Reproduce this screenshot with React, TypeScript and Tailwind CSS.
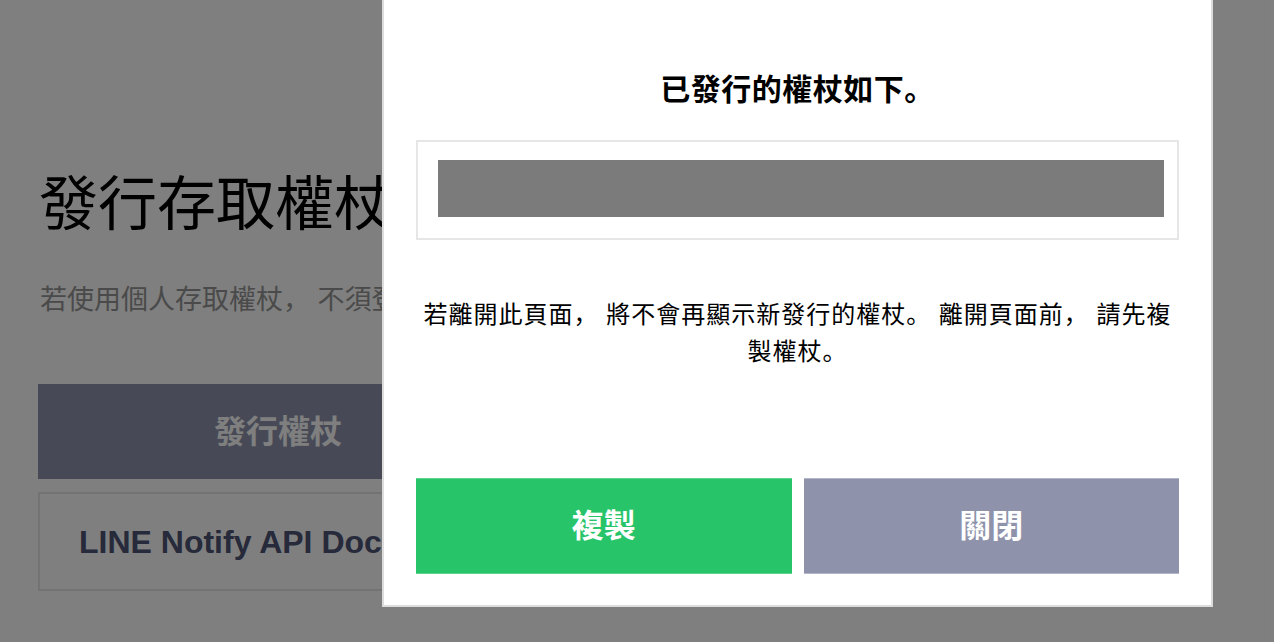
import React from "react";

const P = ({ children }: { children: React.ReactNode }) => (
  <span className="[font-family:'Noto_Sans_CJK_JP',sans-serif]">{children}</span>
);

export default function App() {
  return (
    <div className="relative h-[642px] w-[1274px] overflow-hidden bg-white [font-family:'Liberation_Sans','Noto_Sans_CJK_TC',sans-serif]">
      {/* underlying page */}
      <div className="flex flex-col pl-[38px] pt-[170px]">
        <h1 className="whitespace-nowrap pl-[1px] text-[59px] leading-[70px] text-black">發行存取權杖</h1>
        <p className="mt-[40px] whitespace-nowrap pl-[2px] text-[27px] leading-[36px] text-[#959595]">
          若使用個人存取權杖<P>，</P> 不須登錄服務<P>。</P>
        </p>
        <div className="mt-[66px] flex h-[95px] w-[480px] items-center justify-center bg-[#8e94ac] text-[32px] font-bold text-white">
          發行權杖
        </div>
        <div className="mt-[13px] flex h-[99px] w-[480px] items-center border-2 border-[#e6e6e6] pl-[39px]">
          <span className="whitespace-nowrap text-[32px] font-bold text-[#4c5474]">LINE Notify API Document</span>
        </div>
      </div>

      {/* overlay */}
      <div className="absolute inset-0 bg-black/50" />

      {/* modal */}
      <div className="absolute left-[382px] top-0 flex h-[607px] w-[831px] flex-col border-2 border-t-0 border-[#dcdcdc] bg-white px-[32px]">
        <h2 className="mt-[66px] text-center text-[30px] font-bold leading-[42px] tracking-[0.5px] text-black">
          已發行的權杖如下<P>。</P>
        </h2>
        <div className="mt-[29px] border-2 border-[#e6e6e6] pb-[21px] pl-[20px] pr-[13px] pt-[18px]">
          <div className="h-[57px] bg-[#7b7b7b]" />
        </div>
        <p className="mt-[55px] text-center text-[24px] leading-[35px] tracking-[1px] text-black">
          若離開此頁面<P>，</P> 將不會再顯示新發行的權杖<P>。</P> 離開頁面前<P>，</P> 請先複
          <br />
          製權杖<P>。</P>
        </p>
        <div className="mt-auto mb-[31px] flex gap-[12px]">
          <button className="flex h-[96px] flex-1 items-center justify-center border-y border-y-[#5fd48f] bg-[#28c46a] text-[32px] font-bold text-white">
            複製
          </button>
          <button className="flex h-[96px] flex-1 items-center justify-center border-y border-y-[#b3b6c8] bg-[#8e92ab] text-[32px] font-bold text-white">
            關閉
          </button>
        </div>
      </div>
    </div>
  );
}
